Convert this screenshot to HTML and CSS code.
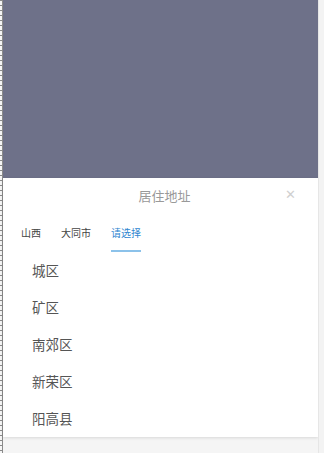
FILE: index.html
```html
<!DOCTYPE html>
<html>
  <head>
    <title>居住地址</title>
    <link rel="stylesheet" href="styles.css">
  </head>
  <body>
    <div class="page">
      <div class="ruler"></div>
      <div class="main">
        <div class="mask"></div>
        <div class="picker">
          <div class="picker-header">
            <span class="picker-title">居住地址</span>
            <span class="picker-close">&#x2715;</span>
          </div>
          <div class="tabs">
            <span class="tab">山西</span>
            <span class="tab">大同市</span>
            <span class="tab active">请选择</span>
          </div>
          <ul class="options">
            <li>城区</li>
            <li>矿区</li>
            <li>南郊区</li>
            <li>新荣区</li>
            <li>阳高县</li>
          </ul>
        </div>
      </div>
      <div class="edge"></div>
    </div>
  </body>
</html>
```
FILE: styles.css
```css
body {
  margin: 0;
  background-color: #f5f5f5;
  font-family: "Noto Sans CJK SC", "Noto Sans", sans-serif;
}

.page {
  display: flex;
  height: 453px;
}

.ruler {
  width: 2px;
  border-right: 1px solid #8a8a8a;
  background: repeating-linear-gradient(
    to bottom,
    #8a8a8a 0,
    #8a8a8a 1px,
    #f5f5f5 1px,
    #f5f5f5 5px
  );
}

.main {
  width: 315px;
  display: flex;
  flex-direction: column;
}

.mask {
  height: 178px;
  background-color: #6e7189;
}

.picker {
  height: 259px;
  background-color: #fff;
  box-shadow: 0 1px 3px rgba(0, 0, 0, 0.12);
}

.picker-header {
  height: 34px;
  position: relative;
  display: flex;
  align-items: center;
  justify-content: center;
  padding-left: 8px;
}

.picker-title {
  font-size: 13px;
  color: #999;
}

.picker-close {
  position: absolute;
  right: 22px;
  top: 6px;
  font-size: 13px;
  color: #d0d0d0;
}

.tabs {
  display: flex;
  gap: 20px;
  height: 40px;
  padding-left: 18px;
}

.tab {
  font-size: 10px;
  color: #444;
  line-height: 42px;
  height: 38px;
}

.tab.active {
  color: #2f86d0;
  border-bottom: 2px solid #8cc2ea;
}

.options {
  list-style: none;
  margin: 0;
  padding: 0 0 0 29px;
}

.options li {
  height: 37px;
  line-height: 36px;
  font-size: 13.5px;
  color: #555;
}

.edge {
  width: 5px;
  border-left: 1px solid #e6e6e6;
  background-color: #f3f3f3;
}
```
